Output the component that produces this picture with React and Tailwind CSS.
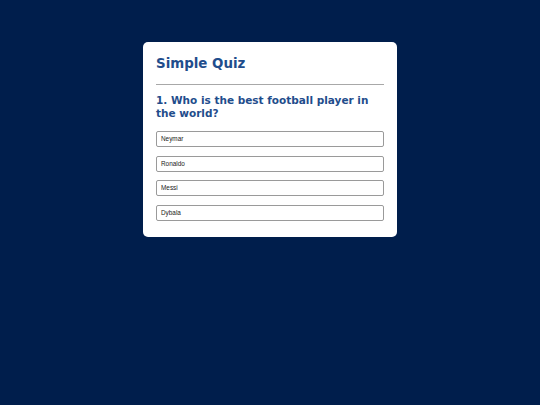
export default function App() {
  const options = ["Neymar", "Ronaldo", "Messi", "Dybala"];
  return (
    <div className="min-h-[405px] w-full bg-[#001e4c] flex justify-center pt-[42px]">
      <div className="w-[254px] h-[195px] bg-white rounded-[5px] pt-[14px] px-[13px] pb-[16px] self-start">
        <h1
          className="text-[13.4px] leading-[15.4px] font-bold text-[#1f4d8c] m-0"
          style={{ fontFamily: '"DejaVu Sans", Verdana, sans-serif' }}
        >
          Simple Quiz
        </h1>
        <div className="mt-[12.4px] h-px bg-[#a8a8a8]" />
        <h2
          className="mt-[9px] text-[10.5px] leading-[13px] font-bold text-[#1f4d8c]"
          style={{ fontFamily: '"DejaVu Sans", Verdana, sans-serif' }}
        >
          1. Who is the best football player in the world?
        </h2>
        <div className="mt-[11.2px] flex flex-col gap-[8.6px]">
          {options.map((o) => (
            <div
              key={o}
              className="h-[16px] border border-[#9a9a9a] rounded-[2px] flex items-center pl-[4px] text-[6.4px] text-[#222222]"
              style={{ fontFamily: '"Liberation Sans", Arial, sans-serif' }}
            >
              {o}
            </div>
          ))}
        </div>
      </div>
    </div>
  );
}
